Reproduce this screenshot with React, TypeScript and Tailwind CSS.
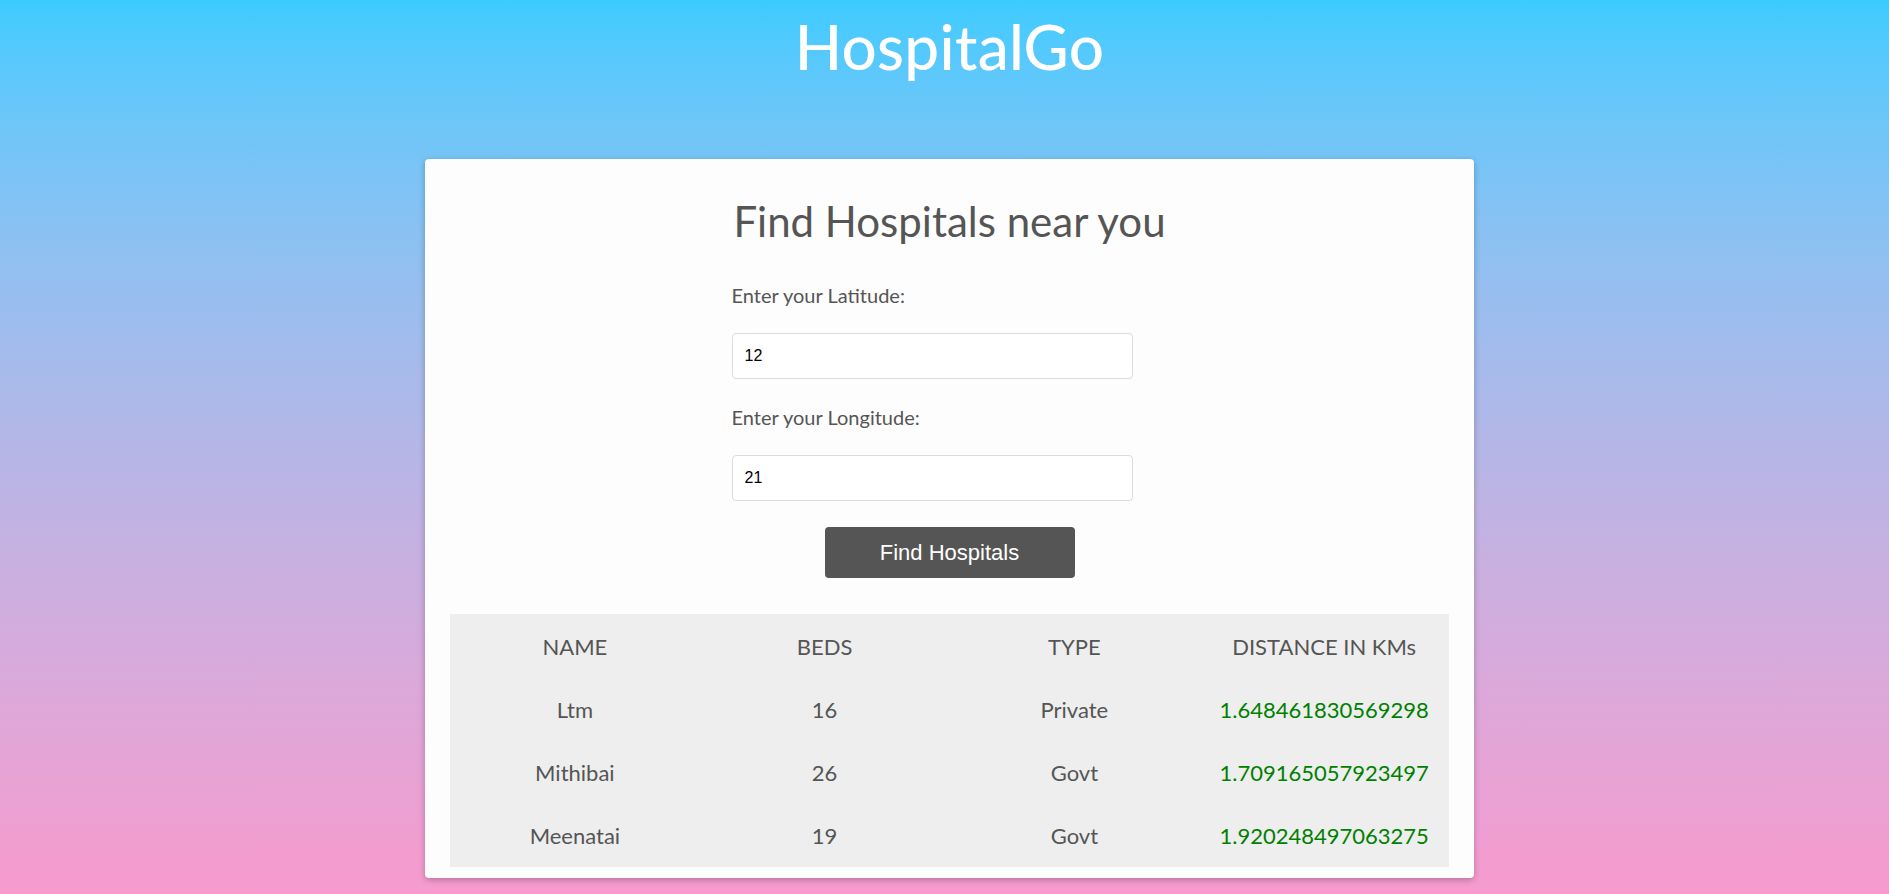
import React from "react";

const rows = [
  { name: "Ltm", beds: "16", type: "Private", dist: "1.648461830569298" },
  { name: "Mithibai", beds: "26", type: "Govt", dist: "1.709165057923497" },
  { name: "Meenatai", beds: "19", type: "Govt", dist: "1.920248497063275" },
];

export default function App() {
  return (
    <div
      className="w-full min-h-[894px] bg-gradient-to-b from-[#3ccbff] to-[#f79ace] pl-[10px]"
      style={{ fontFamily: "Lato, 'Open Sans', sans-serif" }}
    >
      <h1 className="pt-[14px] text-center text-white text-[62px] leading-[64px] font-medium tracking-[0.3px]">
        HospitalGo
      </h1>
      <div className="mx-auto mt-[81px] w-[1049px] rounded-[4px] bg-[#fdfdfd] shadow-[0_2px_6px_rgba(0,0,0,0.25)] px-[25px] pt-[38px] pb-[11px]">
        <h2 className="text-center text-[#555555] text-[42px] leading-[48px]">
          Find Hospitals near you
        </h2>
        <div className="mx-auto w-[436px] pt-[38px]">
          <label className="block text-[#555555] text-[20px] leading-[24px]">
            Enter your Latitude:
          </label>
          <input
            defaultValue="12"
            className="mt-[26px] block w-[401px] h-[46px] rounded-[4px] border border-[#dcdcdc] bg-white px-[12px] text-[16px] text-black outline-none"
            style={{ fontFamily: "'Liberation Sans', Arial, sans-serif" }}
          />
          <label className="mt-[26px] block text-[#555555] text-[20px] leading-[24px]">
            Enter your Longitude:
          </label>
          <input
            defaultValue="21"
            className="mt-[26px] block w-[401px] h-[46px] rounded-[4px] border border-[#dcdcdc] bg-white px-[12px] text-[16px] text-black outline-none"
            style={{ fontFamily: "'Liberation Sans', Arial, sans-serif" }}
          />
        </div>
        <div className="flex justify-center pt-[26px]">
          <button
            className="w-[250px] h-[51px] rounded-[4px] bg-[#555555] text-white text-[22px]"
            style={{ fontFamily: "'Liberation Sans', Arial, sans-serif" }}
          >
            Find Hospitals
          </button>
        </div>
        <div className="mt-[36px] bg-[#eeeeee]">
          <div className="grid grid-cols-4 h-[64px] items-center text-center text-[#555555] text-[22px]">
            <div>NAME</div>
            <div>BEDS</div>
            <div>TYPE</div>
            <div>DISTANCE IN KMs</div>
          </div>
          {rows.map((r) => (
            <div
              key={r.name}
              className="grid grid-cols-4 h-[63px] items-center text-center text-[#555555] text-[22px]"
            >
              <div>{r.name}</div>
              <div>{r.beds}</div>
              <div>{r.type}</div>
              <div className="text-[#008000]">{r.dist}</div>
            </div>
          ))}
        </div>
      </div>
    </div>
  );
}
